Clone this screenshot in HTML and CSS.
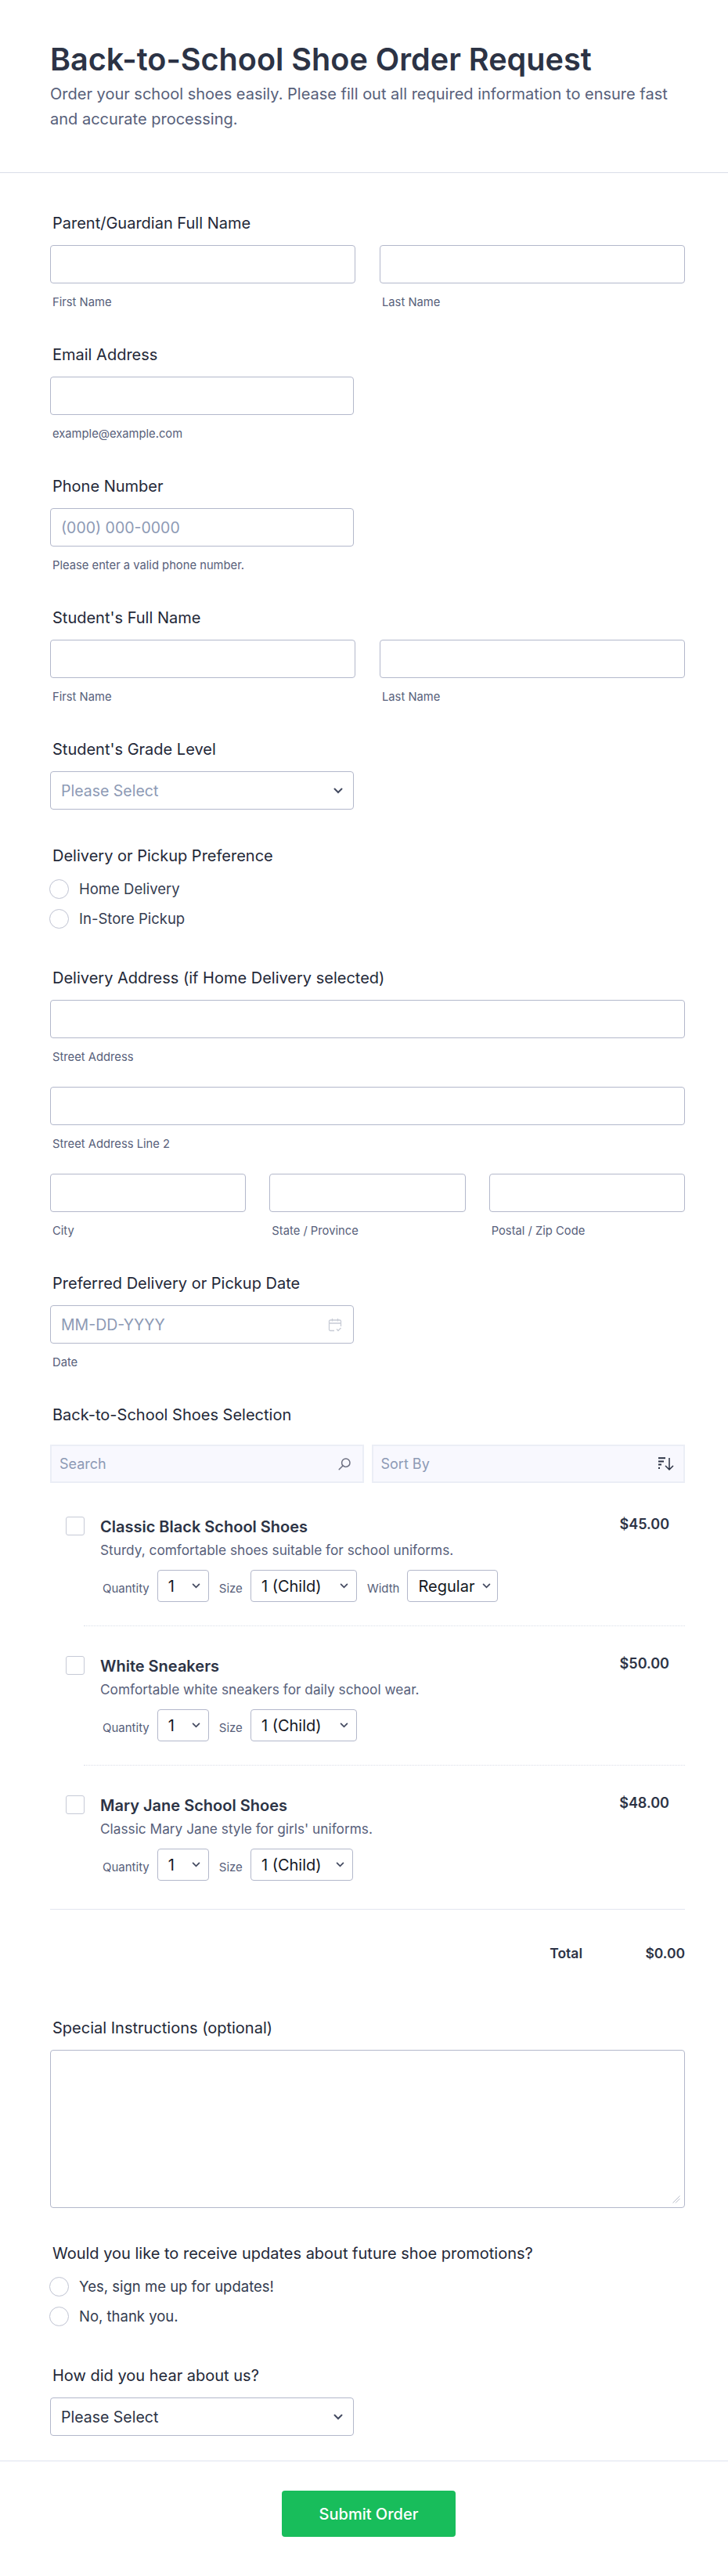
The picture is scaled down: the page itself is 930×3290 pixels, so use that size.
FILE: index.html
```html
<!DOCTYPE html>
<html lang="en">
  <head>
    <meta charset="UTF-8" />
    <meta name="viewport" content="width=device-width, initial-scale=1.0" />
    <title>Back-to-School Shoe Order Request</title>
    <link rel="stylesheet" href="styles.css">
  </head>
  <body>
    <header class="page-header">
      <h1>Back-to-School Shoe Order Request</h1>
      <p>Order your school shoes easily. Please fill out all required information to ensure fast and accurate processing.</p>
    </header>

    <form class="form-body">
      <div class="field">
        <label class="field-label">Parent/Guardian Full Name</label>
        <div class="cols cols-2">
          <div><div class="input"></div><div class="sub">First Name</div></div>
          <div><div class="input"></div><div class="sub">Last Name</div></div>
        </div>
      </div>

      <div class="field">
        <label class="field-label">Email Address</label>
        <div class="half"><div class="input"></div><div class="sub">example@example.com</div></div>
      </div>

      <div class="field">
        <label class="field-label">Phone Number</label>
        <div class="half"><div class="input placeholder">(000) 000-0000</div><div class="sub">Please enter a valid phone number.</div></div>
      </div>

      <div class="field">
        <label class="field-label">Student's Full Name</label>
        <div class="cols cols-2">
          <div><div class="input"></div><div class="sub">First Name</div></div>
          <div><div class="input"></div><div class="sub">Last Name</div></div>
        </div>
      </div>

      <div class="field field-select">
        <label class="field-label">Student's Grade Level</label>
        <div class="half">
          <div class="input placeholder">Please Select
            <svg class="chevron" viewBox="0 0 12 8"><path d="M1.5 1.5 6 6l4.5-4.5" /></svg>
          </div>
        </div>
      </div>

      <div class="field">
        <label class="field-label">Delivery or Pickup Preference</label>
        <div class="radios">
          <div class="radio-row"><span class="radio"></span>Home Delivery</div>
          <div class="radio-row"><span class="radio"></span>In-Store Pickup</div>
        </div>
      </div>

      <div class="field">
        <label class="field-label">Delivery Address (if Home Delivery selected)</label>
        <div class="input"></div>
        <div class="sub">Street Address</div>
        <div class="input next-line"></div>
        <div class="sub">Street Address Line 2</div>
        <div class="cols cols-3 next-line">
          <div><div class="input"></div><div class="sub">City</div></div>
          <div><div class="input"></div><div class="sub">State / Province</div></div>
          <div><div class="input"></div><div class="sub">Postal / Zip Code</div></div>
        </div>
      </div>

      <div class="field">
        <label class="field-label">Preferred Delivery or Pickup Date</label>
        <div class="half">
          <div class="input placeholder">MM-DD-YYYY
            <svg class="calendar" viewBox="0 0 18 18" fill="none">
              <path d="M8 16.5H3a1.5 1.5 0 0 1-1.5-1.5V4.5A1.5 1.5 0 0 1 3 3h12a1.5 1.5 0 0 1 1.5 1.5V11M1.5 7h15M5.5 1v3.5M12.5 1v3.5" />
              <path d="m11 14.5 2 2 3.5-3.5" />
            </svg>
          </div>
          <div class="sub">Date</div>
        </div>
      </div>

      <div class="field products">
        <label class="field-label">Back-to-School Shoes Selection</label>
        <div class="product-tools">
          <div class="tool">Search
            <svg class="icon-search" viewBox="0 0 16 16" fill="none" stroke="#6c6f80" stroke-width="1.5">
              <circle cx="9.8" cy="6.2" r="5.2" />
              <path d="M6 10 1.2 14.8" stroke-linecap="round" />
            </svg>
          </div>
          <div class="tool">Sort By
            <svg class="icon-sort" viewBox="0 0 20 17" fill="none" stroke="#2c3345" stroke-width="1.5">
              <path d="M0 1.2h9" stroke-width="2" />
              <path d="M0 5.5h7M0 9.5h4M0 14h2" stroke-width="1.8" />
              <path d="M14 1v15M9 11l5 5 5-5" />
            </svg>
          </div>
        </div>

        <div class="product">
          <span class="checkbox"></span>
          <div class="product-main">
            <div class="product-name">Classic Black School Shoes</div>
            <div class="product-desc">Sturdy, comfortable shoes suitable for school uniforms.</div>
            <div class="options">
              <span class="opt-label">Quantity</span>
              <div class="mini-select qty">1 <svg class="chevron small" viewBox="0 0 12 8"><path d="M1.5 1.5 6 6l4.5-4.5" /></svg></div>
              <span class="opt-label">Size</span>
              <div class="mini-select size">1 (Child) <svg class="chevron small" viewBox="0 0 12 8"><path d="M1.5 1.5 6 6l4.5-4.5" /></svg></div>
              <span class="opt-label">Width</span>
              <div class="mini-select width">Regular <svg class="chevron small" viewBox="0 0 12 8"><path d="M1.5 1.5 6 6l4.5-4.5" /></svg></div>
            </div>
          </div>
          <div class="price">$45.00</div>
        </div>

        <div class="product">
          <span class="checkbox"></span>
          <div class="product-main">
            <div class="product-name">White Sneakers</div>
            <div class="product-desc">Comfortable white sneakers for daily school wear.</div>
            <div class="options">
              <span class="opt-label">Quantity</span>
              <div class="mini-select qty">1 <svg class="chevron small" viewBox="0 0 12 8"><path d="M1.5 1.5 6 6l4.5-4.5" /></svg></div>
              <span class="opt-label">Size</span>
              <div class="mini-select size">1 (Child) <svg class="chevron small" viewBox="0 0 12 8"><path d="M1.5 1.5 6 6l4.5-4.5" /></svg></div>
            </div>
          </div>
          <div class="price">$50.00</div>
        </div>

        <div class="product last">
          <span class="checkbox"></span>
          <div class="product-main">
            <div class="product-name">Mary Jane School Shoes</div>
            <div class="product-desc">Classic Mary Jane style for girls' uniforms.</div>
            <div class="options">
              <span class="opt-label">Quantity</span>
              <div class="mini-select qty">1 <svg class="chevron small" viewBox="0 0 12 8"><path d="M1.5 1.5 6 6l4.5-4.5" /></svg></div>
              <span class="opt-label">Size</span>
              <div class="mini-select size narrow">1 (Child) <svg class="chevron small" viewBox="0 0 12 8"><path d="M1.5 1.5 6 6l4.5-4.5" /></svg></div>
            </div>
          </div>
          <div class="price">$48.00</div>
        </div>

        <div class="total-row">
          <span>Total</span>
          <span class="total-value">$0.00</span>
        </div>
      </div>

      <div class="field">
        <label class="field-label">Special Instructions (optional)</label>
        <div class="textarea">
          <svg class="grip" viewBox="0 0 10 10"><path d="M9.5.5l-9 9M9.5 4l-5.5 5.5" /></svg>
        </div>
      </div>

      <div class="field">
        <label class="field-label">Would you like to receive updates about future shoe promotions?</label>
        <div class="radios">
          <div class="radio-row"><span class="radio"></span>Yes, sign me up for updates!</div>
          <div class="radio-row"><span class="radio"></span>No, thank you.</div>
        </div>
      </div>

      <div class="field last-field">
        <label class="field-label">How did you hear about us?</label>
        <div class="half">
          <div class="input dark">Please Select
            <svg class="chevron" viewBox="0 0 12 8"><path d="M1.5 1.5 6 6l4.5-4.5" /></svg>
          </div>
        </div>
      </div>
    </form>

    <footer class="page-footer">
      <button class="submit" type="button">Submit Order</button>
    </footer>
  </body>
</html>
```

FILE: styles.css
```css
* {
  box-sizing: border-box;
}

body {
  margin: 0;
  background-color: #fff;
  color: #2c3345;
  font-family: Inter, "Liberation Sans", sans-serif;
  font-size: 16px;
}

.page-header {
  height: 221px;
  padding: 50px 55px 0 64px;
  border-bottom: 1px solid #dadee8;
}

.page-header h1 {
  margin: 0;
  font-size: 39.6px;
  line-height: 52px;
  font-weight: 600;
}

.page-header p {
  margin: 2px 0 0;
  font-size: 20px;
  line-height: 32px;
  color: #57607a;
}

.form-body {
  padding: 51px 55px 0 64px;
}

.field {
  margin-bottom: 45px;
}

.field-select {
  margin-bottom: 46px;
}

.field-label {
  display: block;
  height: 24px;
  margin: 0 0 17px 3px;
  font-size: 20px;
  line-height: 26px;
  font-weight: 400;
  color: #232838;
}

.cols {
  display: grid;
  column-gap: 31px;
}

.cols-2 {
  grid-template-columns: 1fr 1fr;
}

.cols-3 {
  grid-template-columns: 1fr 1fr 1fr;
  column-gap: 30px;
}

.half {
  width: 388px;
}

.input {
  display: flex;
  align-items: center;
  justify-content: space-between;
  height: 49px;
  padding: 0 13px;
  background-color: #fff;
  border: 1px solid #b3b8cb;
  border-radius: 4px;
  font-size: 19.5px;
}

.placeholder {
  color: #8d9ab5;
}

.dark {
  color: #2c3345;
}

.sub {
  height: 18px;
  margin: 15px 0 0 3px;
  font-size: 14.75px;
  line-height: 18px;
  color: #57607a;
}

.next-line {
  margin-top: 29px;
}

.chevron {
  width: 12px;
  height: 8px;
  fill: none;
  stroke: #434a60;
  stroke-width: 2;
  stroke-linecap: round;
}

.chevron.small {
  width: 11px;
  height: 7px;
  flex-shrink: 0;
}

.calendar {
  width: 18px;
  height: 18px;
  margin-right: 1px;
  stroke: #c8ccd6;
  stroke-width: 1.3;
}

.radios {
  margin: -5px 0 -1px -1px;
}

.radio-row {
  display: flex;
  align-items: center;
  gap: 13px;
  height: 38px;
  color: #343c50;
  font-size: 18.5px;
}

.radio {
  width: 25px;
  height: 25px;
  background-color: #fff;
  border: 1px solid #bfc3d2;
  border-radius: 50%;
}

.product-tools {
  display: flex;
  gap: 10px;
  margin: 27px 0 5px;
}

.tool {
  display: flex;
  flex: 1;
  align-items: center;
  justify-content: space-between;
  height: 49px;
  padding: 0 12px 0 10px;
  background-color: #f8f8fe;
  border: 2px solid #ebeef6;
  font-size: 18px;
  color: #8d9ab5;
}

.icon-search {
  width: 16px;
  height: 16px;
  margin-right: 3px;
}

.icon-sort {
  width: 20px;
  height: 17px;
}

.product {
  display: flex;
  align-items: flex-start;
  height: 178px;
  margin-left: 43px;
  padding: 38px 0 0;
  border-bottom: 1px dotted #dadee8;
}

.product.last {
  height: 183px;
  border-bottom: none;
}

.checkbox {
  width: 24px;
  height: 24px;
  margin-left: -23px;
  background-color: #fff;
  border: 1px solid #c6cad6;
  border-radius: 3px;
  flex-shrink: 0;
}

.product-main {
  flex: 1;
  margin-left: 20px;
}

.product-name {
  font-size: 20px;
  line-height: 26px;
  font-weight: 600;
}

.product-desc {
  margin-top: 6px;
  font-size: 17.25px;
  line-height: 22px;
  color: #57607a;
}

.options {
  display: flex;
  align-items: center;
  margin-top: 14px;
  padding-left: 1px;
}

.opt-label {
  margin: 5px 10px 0 2px;
  font-size: 15px;
  color: #57607a;
}

.mini-select {
  display: flex;
  align-items: center;
  justify-content: space-between;
  height: 41px;
  margin-right: 11px;
  padding: 0 10px 0 13px;
  border: 1px solid #b3b8cb;
  border-radius: 4px;
  font-size: 20px;
  color: #14171f;
}

.qty {
  width: 66px;
}

.size {
  width: 136px;
}

.size.narrow {
  width: 131px;
}

.width {
  width: 116px;
  padding-right: 8px;
}

.price {
  margin: -3px 20px 0 0;
  font-size: 18px;
  line-height: 26px;
  font-weight: 600;
}

.total-row {
  display: flex;
  justify-content: flex-end;
  height: 139px;
  padding-top: 44px;
  border-top: 1px solid #e3e5f0;
  font-size: 17.5px;
  line-height: 24px;
  font-weight: 600;
}

.total-value {
  width: 131px;
  text-align: right;
}

.products {
  margin-bottom: 0;
}

.textarea {
  position: relative;
  height: 202px;
  border: 1px solid #b3b8cb;
  border-radius: 4px;
}

.grip {
  position: absolute;
  right: 5px;
  bottom: 5px;
  width: 10px;
  height: 10px;
  stroke: #b8bdc9;
  stroke-width: 1;
}

.last-field {
  margin-bottom: 0;
}

.page-footer {
  height: 178px;
  margin-top: 31px;
  padding-top: 37px;
  text-align: center;
  border-top: 2px solid #eef0f6;
  border-bottom: 1px solid #f1f2f7;
}

.submit {
  width: 222px;
  height: 59px;
  margin-left: 12px;
  background-color: #18bd5b;
  color: #fff;
  border: none;
  border-radius: 4px;
  font-family: Inter, "Liberation Sans", sans-serif;
  font-size: 20px;
  font-weight: 500;
}
```
